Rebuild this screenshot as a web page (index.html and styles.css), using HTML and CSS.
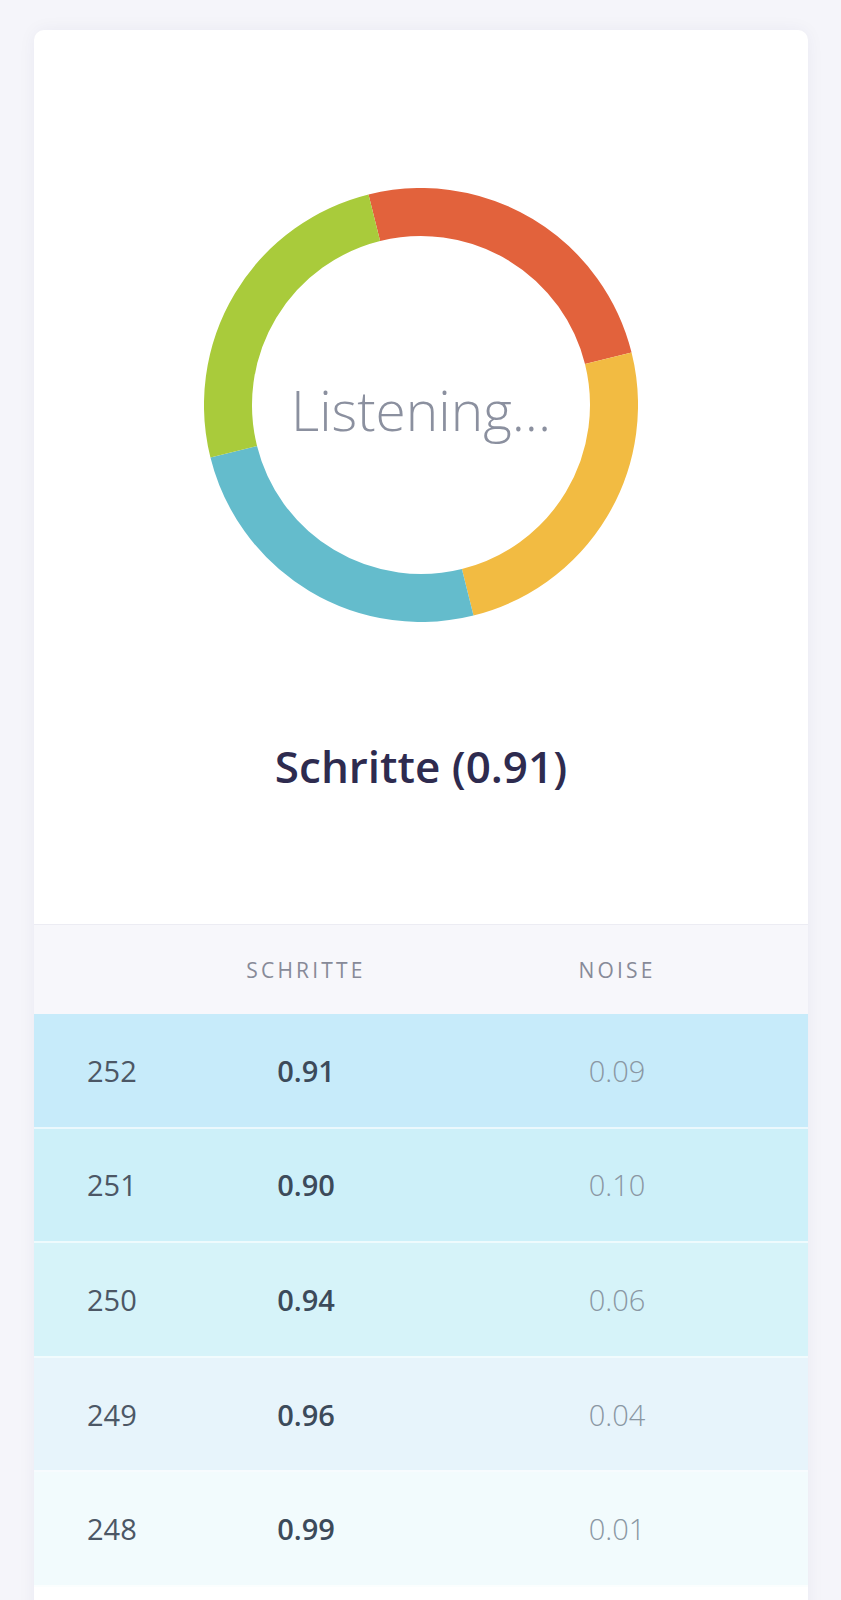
FILE: index.html
```html
<!DOCTYPE html>
<html lang="de">
<head>
  <meta charset="UTF-8" />
  <meta name="viewport" content="width=device-width, initial-scale=1.0"/>
  <title>Listening</title>
  <link rel="stylesheet" href="styles.css">
</head>

<body>
  <div class="card">
    <div class="top">
      <div class="ring">
        <svg class="ring-svg" viewBox="0 0 434 434" width="434" height="434">
          <path d="M170.31 29.73 A193 193 0 0 1 404.27 170.31" stroke="#e2623c" />
          <path d="M404.27 170.31 A193 193 0 0 1 263.69 404.27" stroke="#f2bb42" />
          <path d="M263.69 404.27 A193 193 0 0 1 29.73 263.69" stroke="#64bccc" />
          <path d="M29.73 263.69 A193 193 0 0 1 170.31 29.73" stroke="#a9cb3b" />
        </svg>
        <div class="ring-label">Listening...</div>
      </div>
      <h2 class="result">Schritte (0.91)</h2>
    </div>

    <div class="table">
      <div class="row head">
        <span></span>
        <span class="col">Schritte</span>
        <span class="col">Noise</span>
      </div>
      <div class="row r1">
        <span class="idx">252</span>
        <span class="val">0.91</span>
        <span class="noise">0.09</span>
      </div>
      <div class="row r2">
        <span class="idx">251</span>
        <span class="val">0.90</span>
        <span class="noise">0.10</span>
      </div>
      <div class="row r3">
        <span class="idx">250</span>
        <span class="val">0.94</span>
        <span class="noise">0.06</span>
      </div>
      <div class="row r4">
        <span class="idx">249</span>
        <span class="val">0.96</span>
        <span class="noise">0.04</span>
      </div>
      <div class="row r5">
        <span class="idx">248</span>
        <span class="val">0.99</span>
        <span class="noise">0.01</span>
      </div>
      <div class="row-end"></div>
    </div>
  </div>
</body>
</html>
```

FILE: styles.css
```css
body {
  margin: 0;
  font-family: "Open Sans", "Noto Sans", sans-serif;
  background: #f5f5fa;
  padding: 30px 33px 0 34px;
  height: 1600px;
  box-sizing: border-box;
  overflow: hidden;
}

.card {
  background: white;
  border-radius: 10px;
  box-shadow: 0 0 18px rgba(40, 40, 90, 0.05);
  overflow: hidden;
}

.top {
  display: flex;
  flex-direction: column;
  align-items: center;
  padding: 158px 0 128px;
}

.ring {
  display: grid;
  place-items: center;
  width: 434px;
  height: 434px;
}

.ring-svg,
.ring-label {
  grid-area: 1 / 1;
}

.ring-svg path {
  fill: none;
  stroke-width: 48;
}

.ring-label {
  font-size: 55px;
  font-weight: 300;
  color: #8b909f;
  padding-top: 8px;
}

.result {
  margin: 114px 0 0;
  font-size: 44px;
  font-weight: 600;
  color: #2e2b4f;
  line-height: normal;
}

.row {
  display: grid;
  grid-template-columns: 152px 240px 382px;
  align-items: center;
  height: 112.6px;
  border-bottom: 2px solid rgba(255, 255, 255, 0.65);
  font-size: 29px;
}

.row span {
  text-align: center;
}

.row .idx {
  text-align: left;
  padding-left: 53px;
  color: #4c5765;
}

.val {
  font-weight: 600;
  color: #3c4a5a;
}

.noise {
  font-weight: 300;
  color: #8a97a3;
}

.head {
  height: 89px;
  border-top: 1px solid #ececf3;
  border-bottom: none;
  background: #f7f7fb;
}

.col {
  font-size: 21px;
  letter-spacing: 3.2px;
  text-transform: uppercase;
  color: #878a98;
}

.r1 { background: #c7ebfa; }
.r2 { background: #cdf0f9; }
.r3 { background: #d6f3f9; }
.r4 { background: #e7f4fb; }
.r5 { background: #f2fbfd; }

.row-end {
  height: 60px;
  background: white;
}
```
